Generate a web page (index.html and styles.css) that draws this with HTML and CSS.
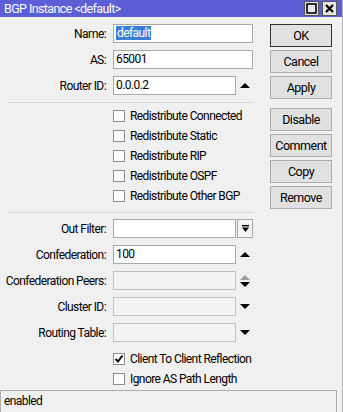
FILE: index.html
```html
<!DOCTYPE html>
<html lang="en">
<head>
    <meta charset="UTF-8">
    <meta name="viewport" content="width=device-width, initial-scale=1.0">
    <title>BGP Instance &lt;default&gt;</title>
    <link rel="stylesheet" href="styles.css">
</head>
<body>
    <div class="window">
        <div class="titlebar">
            <span class="title">BGP Instance &lt;default&gt;</span>
            <div class="win-buttons">
                <span class="win-btn">
                    <svg width="11" height="11" viewBox="0 0 11 11"><rect x="1" y="1" width="9" height="9" fill="none" stroke="#000" stroke-width="1.6"/></svg>
                </span>
                <span class="win-btn">
                    <svg width="11" height="11" viewBox="0 0 11 11"><path d="M2 2 L9 9 M9 2 L2 9" stroke="#000" stroke-width="2.2"/></svg>
                </span>
            </div>
        </div>

        <div class="body">
            <div class="form">
                <div class="row">
                    <label>Name:</label>
                    <div class="input"><span class="selected">default</span></div>
                </div>
                <div class="row">
                    <label>AS:</label>
                    <div class="input">65001</div>
                </div>
                <div class="row">
                    <label>Router ID:</label>
                    <div class="input short">0.0.0.2</div>
                    <span class="slot"><span class="tri-up"></span></span>
                </div>

                <div class="separator"></div>

                <div class="check-row"><span class="box"></span>Redistribute Connected</div>
                <div class="check-row"><span class="box"></span>Redistribute Static</div>
                <div class="check-row"><span class="box"></span>Redistribute RIP</div>
                <div class="check-row"><span class="box"></span>Redistribute OSPF</div>
                <div class="check-row"><span class="box"></span>Redistribute Other BGP</div>

                <div class="separator second"></div>

                <div class="row">
                    <label>Out Filter:</label>
                    <div class="input short"></div>
                    <span class="slot framed">
                        <svg width="9" height="9" viewBox="0 0 9 9"><rect x="1" y="1" width="7" height="1.4" fill="#000"/><path d="M1 3.5 H8 L4.5 8 Z" fill="#000"/></svg>
                    </span>
                </div>
                <div class="row">
                    <label>Confederation:</label>
                    <div class="input short">100</div>
                    <span class="slot"><span class="tri-up"></span></span>
                </div>
                <div class="row">
                    <label>Confederation Peers:</label>
                    <div class="input short disabled"></div>
                    <span class="slot stacked">
                        <span class="tri-up grey"></span>
                        <span class="tri-down"></span>
                    </span>
                </div>
                <div class="row">
                    <label>Cluster ID:</label>
                    <div class="input short disabled"></div>
                    <span class="slot"><span class="tri-down"></span></span>
                </div>
                <div class="row">
                    <label>Routing Table:</label>
                    <div class="input short disabled"></div>
                    <span class="slot"><span class="tri-down"></span></span>
                </div>

                <div class="check-row first">
                    <span class="box">
                        <svg width="10" height="10" viewBox="0 0 10 10"><path d="M1.5 5 L4 7.5 L8.5 1.5" fill="none" stroke="#000" stroke-width="2"/></svg>
                    </span>Client To Client Reflection
                </div>
                <div class="check-row"><span class="box"></span>Ignore AS Path Length</div>
            </div>

            <div class="buttons">
                <button class="btn default">OK</button>
                <button class="btn">Cancel</button>
                <button class="btn">Apply</button>
                <button class="btn group">Disable</button>
                <button class="btn">Comment</button>
                <button class="btn">Copy</button>
                <button class="btn">Remove</button>
            </div>
        </div>

        <div class="status">enabled</div>
    </div>
</body>
</html>
```

FILE: styles.css
```css
body {
    margin: 0;
    background: #f0f0f0;
    font-family: Roboto, "Liberation Sans", sans-serif;
    font-size: 12px;
    letter-spacing: -0.58px;
    color: #000;
}

.window {
    width: 343px;
    height: 412px;
    box-sizing: border-box;
    border-right: 1px solid #b4b4b4;
    overflow: hidden;
}

.titlebar {
    height: 17px;
    background: #5b5ed4;
    display: flex;
    align-items: center;
    justify-content: space-between;
    padding-left: 4px;
    padding-right: 5px;
}

.title {
    color: #fff;
    font-size: 12.5px;
    letter-spacing: -0.6px;
    line-height: 17px;
}

.win-buttons {
    display: flex;
    gap: 3px;
}

.win-btn {
    width: 13px;
    height: 13px;
    background: #e6e6e6;
    border: 1px solid #555;
    display: flex;
    align-items: center;
    justify-content: center;
}

.body {
    display: flex;
    padding-top: 7px;
}

.form {
    width: 255px;
}

.row {
    display: flex;
    align-items: center;
    height: 19px;
    margin-bottom: 7px;
}

.row label {
    width: 106px;
    padding-right: 7px;
    text-align: right;
    white-space: nowrap;
    flex-shrink: 0;
}

.input {
    width: 140px;
    height: 19px;
    box-sizing: border-box;
    border: 1px solid #a9a9a9;
    background: #fff;
    padding-left: 2px;
    line-height: 17px;
    white-space: nowrap;
}

.input.short {
    width: 123px;
}

.input.disabled {
    background: #f3f3f3;
    border-color: #c2c2c2;
}

.selected {
    background: #3a7fd6;
    color: #fff;
    padding: 0 1px;
}

.slot {
    width: 17px;
    height: 19px;
    box-sizing: border-box;
    display: flex;
    align-items: center;
    justify-content: center;
}

.slot.framed {
    margin-left: 1px;
    width: 16px;
    border: 1px solid #a9a9a9;
    background: #f4f4f4;
}

.slot.stacked {
    flex-direction: column;
    gap: 2px;
}

.tri-up {
    width: 0;
    height: 0;
    border-left: 5px solid transparent;
    border-right: 5px solid transparent;
    border-bottom: 5px solid #000;
}

.tri-up.grey {
    border-bottom-color: #9a9a9a;
}

.tri-down {
    width: 0;
    height: 0;
    border-left: 5px solid transparent;
    border-right: 5px solid transparent;
    border-top: 5px solid #000;
}

.separator {
    margin: 1px 0 3px 8px;
    width: 245px;
    border-top: 1px solid #d6d6d6;
}

.separator.second {
    margin-top: 6px;
    margin-bottom: 6px;
}

.check-row {
    display: flex;
    align-items: center;
    height: 20px;
    padding-left: 113px;
    white-space: nowrap;
}

.check-row.first {
    margin-top: 4px;
}

.box {
    width: 12px;
    height: 12px;
    box-sizing: border-box;
    border: 1px solid #8e8e8e;
    background: #fff;
    margin-right: 5px;
    display: flex;
    align-items: center;
    justify-content: center;
    flex-shrink: 0;
}

.buttons {
    margin-left: 15px;
    width: 62px;
    display: flex;
    flex-direction: column;
    gap: 3px;
}

.btn {
    height: 23px;
    box-sizing: border-box;
    border: 1px solid #adadad;
    background: #e1e1e1;
    font-family: inherit;
    font-size: 12.5px;
    letter-spacing: -0.5px;
    color: #000;
    padding: 0;
}

.btn.default {
    border-color: #333;
}

.btn.group {
    margin-top: 6px;
}

.status {
    margin-top: 1px;
    width: 337px;
    height: 24px;
    box-sizing: border-box;
    border: 1px solid #adadad;
    padding-left: 3px;
    line-height: 20px;
}
```
